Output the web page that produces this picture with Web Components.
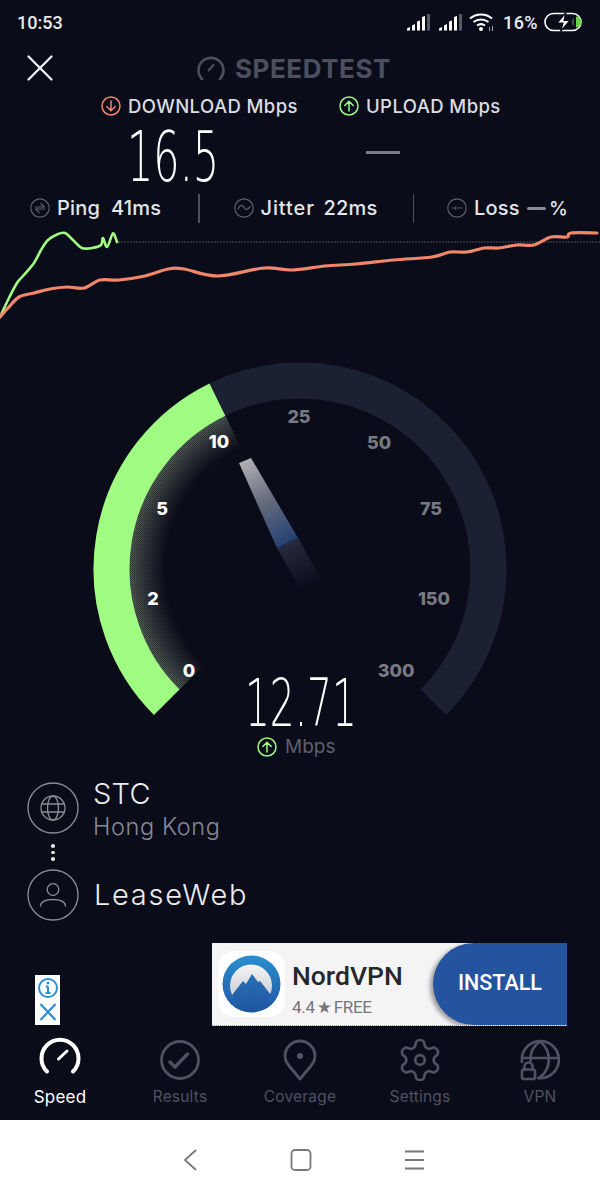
<!DOCTYPE html>
<html><head><meta charset="utf-8"><title>Speedtest</title>
<style>
html,body{margin:0;padding:0;background:#0a0c1a}
body{width:600px;height:1200px;overflow:hidden;font-family:Inter,"Noto Sans",sans-serif;color:#fff}
</style></head><body>
<speed-app>
  <status-bar></status-bar>
  <top-bar></top-bar>
  <result-row></result-row>
  <metric-row></metric-row>
  <graph-panel></graph-panel>
  <speed-gauge></speed-gauge>
  <server-info></server-info>
  <ad-area></ad-area>
  <tab-bar>
    <tab-item active>
      <svg slot="icon" width="44" height="44" viewBox="0 0 44 44" fill="none" stroke="#fff" stroke-width="4" stroke-linecap="round"><path d="M9 34.500A18.500 18.500 0 1 1 35 34.500"/><path d="M20.500 22L29 14" stroke-width="3"/></svg>Speed</tab-item>
    <tab-item>
      <svg slot="icon" width="44" height="44" viewBox="0 0 44 44" fill="none" stroke="#4f5260" stroke-width="2.800" stroke-linecap="round" stroke-linejoin="round"><circle cx="22" cy="23" r="18.500"/><path d="M12 25L17 30L29.500 17" stroke-width="3.400"/></svg>Results</tab-item>
    <tab-item>
      <svg slot="icon" width="44" height="44" viewBox="0 0 44 44" fill="none" stroke="#4f5260" stroke-width="2.800" stroke-linejoin="round"><path d="M22 42L10 27.500C7.500 24 7 21 7 19A15 15 0 0 1 37 19C37 21 36.500 24 34 27.500Z"/><circle cx="22" cy="19" r="3" fill="#4f5260" stroke="none"/></svg>Coverage</tab-item>
    <tab-item>
      <svg slot="icon" width="44" height="44" viewBox="1 .5 22 22" fill="none" stroke="#4f5260" stroke-width="1.350" stroke-linejoin="round"><path d="M12.220 2h-.44a2 2 0 0 0-2 2v.18a2 2 0 0 1-1 1.730l-.43.25a2 2 0 0 1-2 0l-.15-.08a2 2 0 0 0-2.730.73l-.22.38a2 2 0 0 0 .73 2.730l.15.1a2 2 0 0 1 1 1.720v.51a2 2 0 0 1-1 1.740l-.15.09a2 2 0 0 0-.73 2.730l.22.38a2 2 0 0 0 2.730.73l.15-.08a2 2 0 0 1 2 0l.43.25a2 2 0 0 1 1 1.730V20a2 2 0 0 0 2 2h.44a2 2 0 0 0 2-2v-.18a2 2 0 0 1 1-1.730l.43-.25a2 2 0 0 1 2 0l.15.08a2 2 0 0 0 2.730-.73l.22-.39a2 2 0 0 0-.73-2.730l-.15-.08a2 2 0 0 1-1-1.740v-.5a2 2 0 0 1 1-1.740l.15-.09a2 2 0 0 0 .73-2.730l-.22-.38a2 2 0 0 0-2.730-.73l-.15.08a2 2 0 0 1-2 0l-.43-.25a2 2 0 0 1-1-1.730V4a2 2 0 0 0-2-2z"/><circle cx="12" cy="12" r="2.400"/></svg>Settings</tab-item>
    <tab-item>
      <svg slot="icon" width="44" height="44" viewBox="0 0 44 44" fill="none" stroke="#4f5260" stroke-width="2.700" stroke-linecap="round" stroke-linejoin="round"><path d="M4 25A18.500 18.500 0 1 1 20 41"/><path d="M22 4.500C14 10 12 18 12.500 24M22 4.500C33 13 35 31 21 41M4.500 21H40"/><rect x="4" y="32.500" width="13" height="9.500" rx="2"/><path d="M6.500 32.500v-3a4 4 0 0 1 8 0v3"/></svg>VPN</tab-item>
  </tab-bar>
  <nav-bar></nav-bar>
</speed-app>
<script>
function el(name, css, html){
  customElements.define(name, class extends HTMLElement{
    constructor(){super();
      const t=document.createElement('template');
      t.innerHTML='<style>'+css+'</style>'+html;
      this.attachShadow({mode:'open'}).appendChild(t.content.cloneNode(true));}
  });
}
function smooth(p){let d='M'+p[0]+' '+p[1];for(let i=0;i<p.length-2;i+=2){
  const g=(k)=>p[Math.max(0,Math.min(p.length-2,k))],h=(k)=>p[Math.max(1,Math.min(p.length-1,k))];
  const c1x=g(i)+(g(i+2)-g(i-2))/6,c1y=h(i+1)+(h(i+3)-h(i-1))/6,c2x=g(i+2)-(g(i+4)-g(i))/6,c2y=h(i+3)-(h(i+5)-h(i+1))/6;
  d+='C'+[c1x,c1y,c2x,c2y,p[i+2],p[i+3]].map(v=>v.toFixed(1)).join(' ');}return d;}
el('speed-app',':host{display:flex;flex-direction:column;width:600px;height:1200px;background:#0a0c1a}','<slot></slot>');

const bars=()=>`<svg width="24" height="18" viewBox="0 0 24 18"><path fill="#fff" d="M0 15.500l3-1.500v3.500H0zM5 12.500l3-1.500v6.500H5zM10 8.500l3-1v10h-3zM15 4l3-1v14.500h-3z"/><path fill="#555866" d="M20 1h3v16.500h-3z"/></svg>`;
el('status-bar',`
:host{display:flex;align-items:center;height:44px;padding:0 17px 0 17px;font:500 18px Roboto,sans-serif;color:#e9e9ec;flex:none}
.t{flex:1}
.r{display:flex;align-items:center}
.p{margin:0 6px 0 9px;font-size:18px;letter-spacing:.4px}
svg{display:block}
`,`<span class="t">10:53</span><div class="r">${bars()}<span style="width:8px"></span>${bars()}
<svg style="margin-left:6px" width="25" height="20" viewBox="0 0 25 20" fill="none" stroke="#fff" stroke-width="2"><path d="M1 6.500C7 1 17 1 23 6.500M4.500 10C9 6.500 15 6.500 19.500 10M8 13.500C10.500 11.800 13.500 11.800 16 13.500"/><circle cx="12" cy="17" r="2" fill="#fff" stroke="none"/><path d="M20.500 15v4M23.500 14v5" stroke-width="1" stroke="#aaa"/></svg>
<span class="p">16%</span>
<svg width="39" height="20" viewBox="0 0 39 20" fill="none"><rect x="1" y="1.500" width="36" height="17" rx="8.500" stroke="#fff" stroke-width="1.600"/><path d="M32 4.500a5.500 5.500 0 0 1 0 11z" fill="#6bd24a"/><path d="M30 5.500a5.500 5.500 0 0 0 0 9z" fill="#cfe9c5" opacity=".3"/><path d="M22 0.500L13 11h6l-2.500 8.500L26 8.500h-6z" fill="#fff" stroke="#0a0c1a" stroke-width="1.200"/></svg></div>`);

el('top-bar',`
:host{display:flex;align-items:center;height:48px;flex:none;padding-left:27px}
.x{flex:none;display:block}
.m{display:flex;align-items:center;margin-left:144px;color:#4c4f5d;font:700 26px Inter,sans-serif;letter-spacing:.55px}
.m svg{margin-right:10px;display:block}
`,`<svg class="x" width="26" height="26" viewBox="0 0 26 26" stroke="#f4f4f6" stroke-width="2.200" stroke-linecap="round"><path d="M1.500 1.500L24.500 24.500M24.500 1.500L1.500 24.500"/></svg>
<div class="m"><svg width="28" height="24" viewBox="0 0 28 24" fill="none" stroke="#4c4f5d" stroke-width="2.600" stroke-linecap="round"><path d="M5 23A12.500 12.500 0 1 1 23 23"/><path d="M11.500 14.500L16.500 9" stroke-width="2.200"/></svg>SPEEDTEST</div>`);

const arrow=(c,up,s=20)=>`<svg width="${s}" height="${s}" viewBox="0 0 20 20" fill="none" stroke="${c}" stroke-width="1.500" stroke-linecap="round" stroke-linejoin="round"><circle cx="10" cy="10" r="9"/><path d="${up?'M10 15V5.500M5.800 9.500L10 5.300L14.200 9.500':'M10 5v9.500M5.800 10.500L10 14.700L14.200 10.500'}"/></svg>`;
el('result-row',`
:host{display:flex;flex:none;padding-left:101px;box-sizing:border-box;height:100px}
.c{width:238px;flex:none}
.l{display:flex;align-items:center;gap:7px;height:28px;font:500 18.500px Inter,sans-serif;color:#dcdde1;letter-spacing:.42px;white-space:nowrap}
.l svg{display:block;flex:none}
.v{font:200 69px/60px "DejaVu Sans",Roboto,sans-serif;color:#fff;margin:7px 0 0 26px;transform:scaleX(.6);transform-origin:0 50%;white-space:nowrap}
.d{width:34px;height:3px;background:#7a7c88;margin:31px 0 0 27px}
`,`<div class="c"><div class="l">${arrow('#f0876b',false)}<span>DOWNLOAD Mbps</span></div><div class="v">16.5</div></div>
<div class="c"><div class="l">${arrow('#a0fb82',true)}<span>UPLOAD Mbps</span></div><div class="d"></div></div>`);

const ci=(inner)=>`<svg width="20" height="20" viewBox="0 0 20 20" fill="none" stroke="#5d606d" stroke-width="1.200" stroke-linecap="round" stroke-linejoin="round"><circle cx="10" cy="10" r="9.200"/>${inner}</svg>`;
el('metric-row',`
:host{display:flex;align-items:center;height:32px;padding-bottom:6px;flex:none;padding-left:30px;font:500 20px Inter,sans-serif;letter-spacing:.2px;color:#e4e5e8;white-space:nowrap}
span{display:block}
svg{display:block;flex:none}
.i{margin-right:7px}
.b{width:1.500px;height:29px;background:#4c4f5c;flex:none}
.dash{width:19px;height:3px;background:#8a8c96;border-radius:2px;margin:0 3px 0 8px}
`,`<span class="i">${ci('<path d="M5.500 9h9L10.800 5.500M14.500 11h-9l3.700 3.500"/>')}</span><span style="width:44px">Ping</span><span style="margin-left:10px;width:50px">41ms</span>
<span class="b" style="margin-left:37px"></span>
<span class="i" style="margin-left:34px">${ci('<path d="M4 11c2-4.500 4-4.500 6-1.500s4 2.500 6-1"/>')}</span><span style="width:54px;letter-spacing:.9px">Jitter</span><span style="margin-left:9px;width:53px">22ms</span>
<span class="b" style="margin-left:36px"></span>
<span class="i" style="margin-left:33px">${ci('<path d="M5 10h2.500M12.500 10H15M9 8.500l-.7 3M11 9.500l-.7 1.500" stroke-width="1"/>')}</span><span style="width:45px">Loss</span><span class="dash"></span><span style="letter-spacing:-.6px;font-size:19px">%</span>`);

const green=[0,317,8,300,17,283,23,276,34,263,41,250,48,240,57,234.5,65,233,73,240,82,248,92,248,101,245,103,238,107,247,112,235,114,234,117,242];
const orange=[0,317,8,308,19,297,34,293,50,289,67,287,84,288,100,280,119,280,145,276,168,269,184,269,218,276,264,268,291,270,325,266,356,264,394,260,432,257,450,252,467,252,484,248,499,248,517,245,534,245,551,237,567,237,571,233,597,233];
el('graph-panel',`:host{display:block;height:100px;flex:none}svg{display:block}`,
`<svg width="600" height="100" viewBox="0 230 600 100" fill="none" stroke-linejoin="round" stroke-linecap="round">
<path d="M118 242H600" stroke="#4a4d58" stroke-width="1" stroke-dasharray="2 1" stroke-linecap="butt"/>
<path d="${smooth(green)}" stroke="#a0fb82" stroke-width="2.600"/>
<path d="${smooth(orange)}" stroke="#f0876b" stroke-width="3.200"/>
</svg>`);

const lbl=(x,y,t,on)=>`<text x="${x}" y="${y}" text-anchor="middle" fill="${on?'#fff':'#787a83'}">${t}</text>`;
el('speed-gauge',`:host{display:block;height:440px;flex:none}svg{display:block}
.n text{font:800 18px Inter,sans-serif}
.big{font:200 66px "DejaVu Sans",Roboto,sans-serif;fill:#fff}
.u{font:400 19px Inter,sans-serif;fill:#5d606c}`,
`<svg width="600" height="440" viewBox="0 330 600 440" fill="none">
<defs>
<radialGradient id="g" gradientUnits="userSpaceOnUse" cx="300" cy="569" r="171">
<stop offset=".79" stop-color="#0a0c1a"/><stop offset=".9" stop-color="#2c3236"/><stop offset="1" stop-color="#505c52"/></radialGradient>
<linearGradient id="nd" gradientUnits="userSpaceOnUse" x1="245" y1="460" x2="288" y2="544">
<stop offset="0" stop-color="#b0b0b4"/><stop offset=".5" stop-color="#646a7c"/><stop offset="1" stop-color="#234073"/></linearGradient>
<linearGradient id="nt" gradientUnits="userSpaceOnUse" x1="288" y1="544" x2="312" y2="586">
<stop offset="0" stop-color="#2a3144"/><stop offset="1" stop-color="#0a0c1a"/></linearGradient>
<pattern id="dots" width="2" height="2" patternUnits="userSpaceOnUse"><rect width="1" height="1" fill="#0a0c1a" opacity=".45"/><rect x="1" y="1" width="1" height="1" fill="#0a0c1a" opacity=".2"/></pattern>
</defs>
<path d="M166.700 702.300A188.500 188.500 0 1 1 433.300 702.300" stroke="#1b2133" stroke-width="36"/>
<path d="M194 675A150 150 0 0 1 234.200 434" stroke="url(#g)" stroke-width="44"/>
<path d="M194 675A150 150 0 0 1 234.200 434" stroke="url(#dots)" stroke-width="44"/>
<path d="M166.700 702.300A188.500 188.500 0 0 1 217.400 399.600" stroke="#a0fb82" stroke-width="36"/>
<path d="M239 463L251 458L298 538L277 548Z" fill="url(#nd)"/>
<path d="M277 548L298 538L322 580L302 592Z" fill="url(#nt)"/>
<path d="M277 548L298 538L322 580L302 592Z" fill="url(#dots)"/>
<g class="n">${lbl(299,423,'25')}${lbl(379,448.5,'50')}${lbl(431,514.5,'75')}${lbl(434,604.5,'150')}${lbl(396,676.5,'300')}${lbl(189,676.5,'0',1)}${lbl(153,604.5,'2',1)}${lbl(162,514.5,'5',1)}${lbl(219,447.5,'10',1)}</g>
<text class="big" transform="translate(245 726) scale(.592 1)">12.71</text>
<g transform="translate(257 737)">${arrow('#a0fb82',true)}</g>
<text class="u" x="285" y="753">Mbps</text>
</svg>`);

el('server-info',`
:host{display:flex;flex-direction:column;height:170px;padding:12px 0 0 27px;box-sizing:border-box;flex:none;font:300 29px Inter,sans-serif;color:#eceded}
.r{display:flex;align-items:center;gap:14px}
.c{width:52px;height:52px;flex:none;display:block}
.s{font:300 23.500px/34px Inter,sans-serif;color:#878994;letter-spacing:.6px}
.t{line-height:32px;letter-spacing:.3px}
.w{letter-spacing:1.700px;margin-left:1px}
.d{display:flex;flex-direction:column;gap:3px;width:52px;align-items:center;margin:10px 0 8px}
.d i{display:block;width:3.500px;height:3.500px;background:#e0e0e0;border-radius:50%}
.tt{height:52px;margin-top:-4px;align-self:flex-start}
`,`<div class="r"><svg class="c" viewBox="0 0 52 52" fill="none" stroke="#8c8d95" stroke-width="1.300"><circle cx="26" cy="26" r="25"/><circle cx="26" cy="26" r="12"/><ellipse cx="26" cy="26" rx="5.500" ry="12"/><path d="M14.500 22H37.500M14.500 30H37.500"/></svg><div class="tt"><div class="t">STC</div><div class="s">Hong Kong</div></div></div>
<div class="d"><i></i><i></i><i></i></div>
<div class="r"><svg class="c" viewBox="0 0 52 52" fill="none" stroke="#8c8d95" stroke-width="1.300" stroke-linecap="round"><circle cx="26" cy="26" r="25"/><circle cx="26" cy="20.500" r="5.800"/><path d="M13.500 37C14 32 19 30.500 26 30.500S38 32 38.500 37"/></svg><div class="t w">LeaseWeb</div></div>`);

el('ad-area',`
:host{display:flex;align-items:flex-end;height:90px;flex:none;padding-left:35px;box-sizing:border-box}
.s{width:25px;height:50px;background:#fff;display:flex;flex-direction:column;align-items:center;flex:none;margin-bottom:5px}
.s svg{display:block}
.a{margin-left:152px;width:355px;height:83px;background:#f4f4f5;display:flex;flex:none;align-items:center;overflow:hidden;margin-bottom:4px;border-bottom:1px dotted #999;box-sizing:border-box}
.logo{display:block;margin-left:6px;flex:none}
.tx{margin:10px 0 0 7px;font-family:Roboto,sans-serif;flex:none;width:141px}
.n{font:500 26.500px/31px Roboto,sans-serif;color:#26262b}
.f{font:400 17px/24px Roboto,sans-serif;color:#75757b;margin-top:4px;white-space:nowrap;display:flex;align-items:center;gap:2px;letter-spacing:-.3px}
.f b{font:400 17px/24px "DejaVu Sans",sans-serif}
.b{flex:1;height:100%;background:#24539f;border-radius:42px 0 0 42px;box-shadow:-3px 2px 4px #9a9a9e;display:flex;align-items:center;padding:0 0 4px 25px;box-sizing:border-box;font:500 21.500px Roboto,sans-serif;color:#fff}
`,`<div class="s"><svg width="22" height="26" viewBox="0 0 22 26" fill="none" stroke="#2b8fd0" stroke-width="2"><circle cx="11" cy="13" r="9"/><path d="M11 11.500V18M8.500 18h5M8.800 11.500H11" stroke-width="2"/><circle cx="11" cy="8" r="1.500" fill="#2b8fd0" stroke="none"/></svg>
<svg width="20" height="22" viewBox="0 0 20 22" fill="none" stroke="#2b8fd0" stroke-width="2.200"><path d="M2.500 3L17.500 19M17.500 3L2.500 19"/></svg></div>
<div class="a"><svg class="logo" width="67" height="66" viewBox="0 0 67 66"><defs><linearGradient id="lb" x1="0" y1="0" x2="0" y2="1"><stop offset="0" stop-color="#2a8fd0"/><stop offset="1" stop-color="#1f55a3"/></linearGradient><linearGradient id="ld" x1="0" y1="0" x2="0" y2="1"><stop offset="0" stop-color="#f4f4f5"/><stop offset=".6" stop-color="#d3d6da"/><stop offset="1" stop-color="#e8e9ec"/></linearGradient><linearGradient id="lm" x1="0" y1="0" x2="0" y2="1"><stop offset="0" stop-color="#2a70b5"/><stop offset="1" stop-color="#1f55a3"/></linearGradient></defs><rect width="67" height="66" rx="16" fill="#fff"/><ellipse cx="33.500" cy="33" rx="29" ry="28.500" fill="url(#lb)"/><circle cx="33" cy="34.500" r="21" fill="url(#ld)"/><path d="M14 44L25 30L28 33L34 23L40 31L42 30L53 44C48 54 41 60 33.500 60S19 54 14 44Z" fill="url(#lm)"/></svg>
<div class="tx"><div class="n">NordVPN</div><div class="f"><span>4.4</span><b>★</b><span>FREE</span></div></div><div class="b">INSTALL</div></div>`);

el('tab-bar',`:host{display:grid;grid-template-columns:repeat(5,120px);height:90px;flex:none}`,'<slot></slot>');
el('tab-item',`
:host{display:flex;flex-direction:column;align-items:center;font:400 15.500px Inter,sans-serif;color:#4f5260;letter-spacing:.2px}
:host([active]){color:#fff;font-size:17px}
.i{height:44px;margin-top:7px;margin-bottom:6px;display:block}
`,`<div class="i"><slot name="icon"></slot></div><slot></slot>`);

el('nav-bar',`:host{display:flex;justify-content:center;align-items:center;height:80px;flex:none;background:#fff}
svg{display:block}`,
`<svg width="250" height="22" viewBox="0 0 250 22" fill="none" stroke="#77777c" stroke-width="1.800"><path d="M21 1L10 11L21 21"/><rect x="116.500" y="1" width="19" height="20" rx="3.500"/><path d="M230 2.500H249M230 11H249M230 19.500H249"/></svg>`);
</script>
</body></html>
